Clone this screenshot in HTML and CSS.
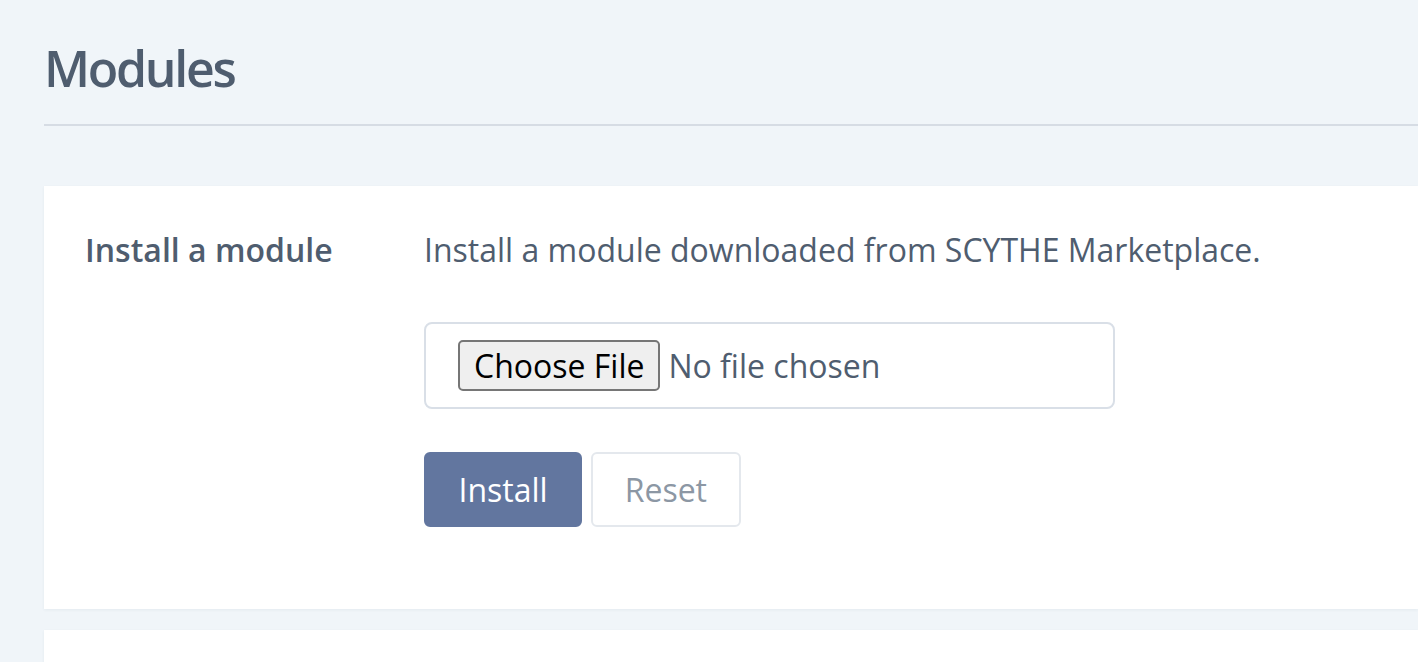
FILE: index.html
```html
<!DOCTYPE html>
<html lang="en">
<head>
<meta charset="utf-8">
<title>Modules</title>
<link rel="stylesheet" href="styles.css">
</head>
<body>
<main class="page">
  <header class="page-header">
    <h1 class="page-title">Modules</h1>
  </header>
  <section class="card">
    <div class="form-row">
      <div class="form-label">Install a module</div>
      <div class="form-body">
        <p class="form-desc">Install a module downloaded from SCYTHE Marketplace.</p>
        <div class="file-box">
          <input class="file-input" type="file" id="module-file">
        </div>
        <div class="actions">
          <button class="btn btn-primary" type="button">Install</button>
          <button class="btn btn-default" type="button">Reset</button>
        </div>
      </div>
    </div>
  </section>
  <section class="card card-next"></section>
</main>
</body>
</html>
```

FILE: styles.css
```css
html, body {
  margin: 0;
  padding: 0;
  background: #f0f5f9;
  overflow: hidden;
}

body {
  font-family: "Open Sans", "Noto Sans", sans-serif;
  color: #4f5d6f;
}

.page {
  padding: 0 0 0 44px;
}

.page-header {
  padding-top: 38px;
  padding-bottom: 26px;
  border-bottom: 2px solid #d6dce4;
}

.page-title {
  margin: 0;
  font-size: 50px;
  line-height: 60px;
  font-weight: 600;
  letter-spacing: -2.3px;
  color: #4f5d6f;
}

.card {
  margin-top: 60px;
  background: #ffffff;
  box-shadow: 0 1px 3px rgba(40, 60, 90, 0.06);
}

.card-next {
  margin-top: 21px;
  height: 60px;
}

.form-row {
  display: grid;
  grid-template-columns: 339px 1fr;
  padding: 40px 41px 82px 41px;
}

.form-label {
  font-size: 32px;
  line-height: 48px;
  font-weight: 600;
  color: #4f5d6f;
}

.form-desc {
  margin: 0;
  font-size: 32px;
  line-height: 48px;
  color: #4f5d6f;
}

.file-box {
  margin-top: 48px;
  width: 691px;
  box-sizing: border-box;
  border: 2px solid #d9dfe7;
  border-radius: 8px;
  padding: 16px 32px;
  display: flex;
  align-items: center;
}

.file-input {
  font-family: "Open Sans", "Noto Sans", sans-serif;
  font-size: 32px;
  color: #4f5d6f;
  height: 51px;
}

.file-input::file-selector-button {
  font-family: "Open Sans", "Noto Sans", sans-serif;
  font-size: 32px;
  color: #000;
  background: #efefef;
  border: 2px solid #767676;
  border-radius: 5px;
  height: 51px;
  padding: 0 14px;
  margin-right: 8px;
}

.actions {
  margin-top: 43px;
  display: flex;
  gap: 9px;
}

.btn {
  font-family: "Open Sans", "Noto Sans", sans-serif;
  font-size: 32px;
  line-height: 47px;
  padding: 12px 32px;
  border-radius: 6px;
  border: 2px solid transparent;
  cursor: pointer;
}

.btn-primary {
  background: #62769f;
  border-color: #62769f;
  color: #ffffff;
  padding: 12px 32.5px;
}

.btn-default {
  background: #ffffff;
  border-color: #e4e8ed;
  color: #8c97a4;
  padding: 12px 31.5px;
}
```
